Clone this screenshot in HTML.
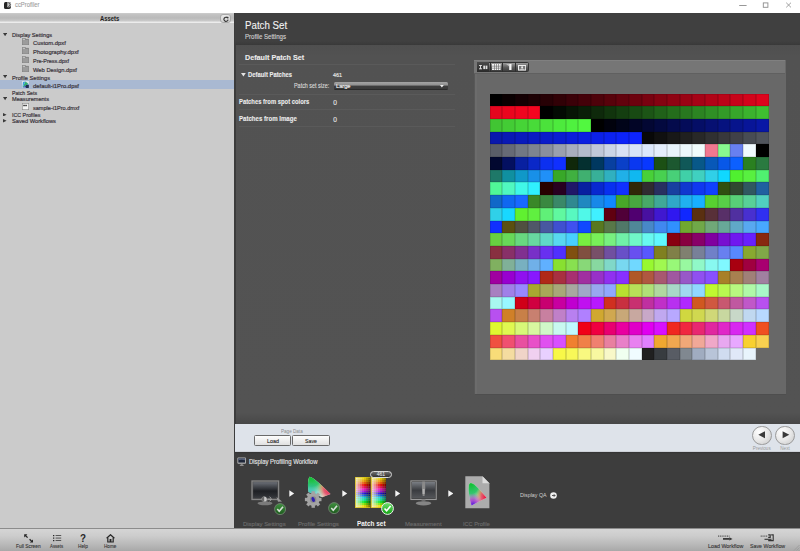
<!DOCTYPE html>
<html><head><meta charset="utf-8">
<style>
*{margin:0;padding:0;box-sizing:border-box}
html,body{width:800px;height:551px;overflow:hidden;background:#fff;font-family:"Liberation Sans",sans-serif}
.abs{position:absolute}
#title{left:0;top:0;width:800px;height:13px;background:#fff}
#left{left:0;top:13px;width:235px;height:515px;background:#cbcbcb}
#assets{left:0;top:13px;width:234px;height:10px;background:linear-gradient(#cfcfcf 0,#c4c4c4 12%,#bababa 55%,#c8c8c8 85%,#e4e4e4 100%);border-bottom:1px solid #ececec}
#sep{left:234px;top:13px;width:2px;height:515px;background:#3c3c3c}
#hdr{left:235px;top:13px;width:566px;height:31.5px;background:linear-gradient(#404040 0%,#404040 88%,#393939 100%)}
#content{left:236px;top:44.5px;width:564px;height:379px;background:linear-gradient(#4f4f4f,#525252 3%,#535353 97%,#474747)}
#panel{left:473.5px;top:60px;width:312px;height:334.5px;background:#686868;border-left:1px solid #585858;border-bottom:1px solid #4e4e4e;box-shadow:inset 2px 0 0 #6c6c6c}
#ptool{left:474px;top:60px;width:311px;height:14px;background:#767676;border-bottom:1px solid #606060}
#grid{left:490px;top:94px;width:279px;height:266px}
#pagebar{left:234.5px;top:423.5px;width:566px;height:28.5px;background:#dee3ea}
#wf{left:234.5px;top:452px;width:566px;height:76px;background:linear-gradient(#333 0,#3d3d3d 2px)}
#bottom{left:0;top:528px;width:800px;height:23px;background:linear-gradient(#d6d6d6 0%,#cccccc 35%,#b4b4b4 80%,#a8a8a8 100%)}
#grid i{position:absolute;box-shadow:inset 0 0 0 0.6px rgba(0,0,0,.2)}
.t{position:absolute;white-space:nowrap;line-height:1}
</style></head><body>
<div id="title" class="abs"></div>
<div id="left" class="abs"></div>
<div id="assets" class="abs"></div>
<div id="sep" class="abs"></div>
<div id="hdr" class="abs"></div>
<div id="content" class="abs"></div>
<div id="panel" class="abs"></div>
<div id="ptool" class="abs"></div>
<div id="grid" class="abs"><i style="left:0px;top:0px;width:12px;height:12px;background:#000000"></i>
<i style="left:12px;top:0px;width:13px;height:12px;background:#0a0001"></i>
<i style="left:25px;top:0px;width:13px;height:12px;background:#140003"></i>
<i style="left:38px;top:0px;width:12px;height:12px;background:#1d0104"></i>
<i style="left:50px;top:0px;width:13px;height:12px;background:#270105"></i>
<i style="left:63px;top:0px;width:13px;height:12px;background:#310106"></i>
<i style="left:76px;top:0px;width:12px;height:12px;background:#3b0108"></i>
<i style="left:88px;top:0px;width:13px;height:12px;background:#450109"></i>
<i style="left:101px;top:0px;width:13px;height:12px;background:#4e020a"></i>
<i style="left:114px;top:0px;width:12px;height:12px;background:#58020b"></i>
<i style="left:126px;top:0px;width:13px;height:12px;background:#62020d"></i>
<i style="left:139px;top:0px;width:13px;height:12px;background:#6d020e"></i>
<i style="left:152px;top:0px;width:12px;height:12px;background:#790210"></i>
<i style="left:164px;top:0px;width:13px;height:12px;background:#840311"></i>
<i style="left:177px;top:0px;width:13px;height:12px;background:#8f0313"></i>
<i style="left:190px;top:0px;width:12px;height:12px;background:#9a0314"></i>
<i style="left:202px;top:0px;width:13px;height:12px;background:#a60316"></i>
<i style="left:215px;top:0px;width:13px;height:12px;background:#b10417"></i>
<i style="left:228px;top:0px;width:12px;height:12px;background:#bc0418"></i>
<i style="left:240px;top:0px;width:13px;height:12px;background:#c7041a"></i>
<i style="left:253px;top:0px;width:13px;height:12px;background:#d3041b"></i>
<i style="left:266px;top:0px;width:13px;height:12px;background:#de041d"></i>
<i style="left:0px;top:12px;width:12px;height:13px;background:#e4051e"></i>
<i style="left:12px;top:12px;width:13px;height:13px;background:#ea051e"></i>
<i style="left:25px;top:12px;width:13px;height:13px;background:#ef051f"></i>
<i style="left:38px;top:12px;width:12px;height:13px;background:#f50520"></i>
<i style="left:50px;top:12px;width:13px;height:13px;background:#000000"></i>
<i style="left:63px;top:12px;width:13px;height:13px;background:#030a03"></i>
<i style="left:76px;top:12px;width:12px;height:13px;background:#071505"></i>
<i style="left:88px;top:12px;width:13px;height:13px;background:#0a1f08"></i>
<i style="left:101px;top:12px;width:13px;height:13px;background:#0e290b"></i>
<i style="left:114px;top:12px;width:12px;height:13px;background:#11340d"></i>
<i style="left:126px;top:12px;width:13px;height:13px;background:#143e10"></i>
<i style="left:139px;top:12px;width:13px;height:13px;background:#184a13"></i>
<i style="left:152px;top:12px;width:12px;height:13px;background:#1c5516"></i>
<i style="left:164px;top:12px;width:13px;height:13px;background:#206119"></i>
<i style="left:177px;top:12px;width:13px;height:13px;background:#246d1c"></i>
<i style="left:190px;top:12px;width:12px;height:13px;background:#28781f"></i>
<i style="left:202px;top:12px;width:13px;height:13px;background:#2c8422"></i>
<i style="left:215px;top:12px;width:13px;height:13px;background:#2f8f25"></i>
<i style="left:228px;top:12px;width:12px;height:13px;background:#339b28"></i>
<i style="left:240px;top:12px;width:13px;height:13px;background:#37a72b"></i>
<i style="left:253px;top:12px;width:13px;height:13px;background:#3bb22e"></i>
<i style="left:266px;top:12px;width:13px;height:13px;background:#3fbe31"></i>
<i style="left:0px;top:25px;width:12px;height:13px;background:#41c533"></i>
<i style="left:12px;top:25px;width:13px;height:13px;background:#43cc35"></i>
<i style="left:25px;top:25px;width:13px;height:13px;background:#46d437"></i>
<i style="left:38px;top:25px;width:12px;height:13px;background:#48db39"></i>
<i style="left:50px;top:25px;width:13px;height:13px;background:#4be23b"></i>
<i style="left:63px;top:25px;width:13px;height:13px;background:#4dea3d"></i>
<i style="left:76px;top:25px;width:12px;height:13px;background:#4ff13f"></i>
<i style="left:88px;top:25px;width:13px;height:13px;background:#52f840"></i>
<i style="left:101px;top:25px;width:13px;height:13px;background:#000000"></i>
<i style="left:114px;top:25px;width:12px;height:13px;background:#01020d"></i>
<i style="left:126px;top:25px;width:13px;height:13px;background:#010419"></i>
<i style="left:139px;top:25px;width:13px;height:13px;background:#020526"></i>
<i style="left:152px;top:25px;width:12px;height:13px;background:#030733"></i>
<i style="left:164px;top:25px;width:13px;height:13px;background:#03093f"></i>
<i style="left:177px;top:25px;width:13px;height:13px;background:#040b4c"></i>
<i style="left:190px;top:25px;width:12px;height:13px;background:#040c59"></i>
<i style="left:202px;top:25px;width:13px;height:13px;background:#050e66"></i>
<i style="left:215px;top:25px;width:13px;height:13px;background:#061072"></i>
<i style="left:228px;top:25px;width:12px;height:13px;background:#06127f"></i>
<i style="left:240px;top:25px;width:13px;height:13px;background:#07148c"></i>
<i style="left:253px;top:25px;width:13px;height:13px;background:#081598"></i>
<i style="left:266px;top:25px;width:13px;height:13px;background:#0817a5"></i>
<i style="left:0px;top:38px;width:12px;height:12px;background:#0918ac"></i>
<i style="left:12px;top:38px;width:13px;height:12px;background:#0919b4"></i>
<i style="left:25px;top:38px;width:13px;height:12px;background:#091abc"></i>
<i style="left:38px;top:38px;width:12px;height:12px;background:#0a1bc3"></i>
<i style="left:50px;top:38px;width:13px;height:12px;background:#0a1cca"></i>
<i style="left:63px;top:38px;width:13px;height:12px;background:#0a1dd2"></i>
<i style="left:76px;top:38px;width:12px;height:12px;background:#0b1eda"></i>
<i style="left:88px;top:38px;width:13px;height:12px;background:#0b20e1"></i>
<i style="left:101px;top:38px;width:13px;height:12px;background:#0c21e8"></i>
<i style="left:114px;top:38px;width:12px;height:12px;background:#0c22f0"></i>
<i style="left:126px;top:38px;width:13px;height:12px;background:#0c23f8"></i>
<i style="left:139px;top:38px;width:13px;height:12px;background:#0d24ff"></i>
<i style="left:152px;top:38px;width:12px;height:12px;background:#080808"></i>
<i style="left:164px;top:38px;width:13px;height:12px;background:#101010"></i>
<i style="left:177px;top:38px;width:13px;height:12px;background:#181818"></i>
<i style="left:190px;top:38px;width:12px;height:12px;background:#202020"></i>
<i style="left:202px;top:38px;width:13px;height:12px;background:#282828"></i>
<i style="left:215px;top:38px;width:13px;height:12px;background:#303032"></i>
<i style="left:228px;top:38px;width:12px;height:12px;background:#38383c"></i>
<i style="left:240px;top:38px;width:13px;height:12px;background:#404048"></i>
<i style="left:253px;top:38px;width:13px;height:12px;background:#484c54"></i>
<i style="left:266px;top:38px;width:13px;height:12px;background:#50545c"></i>
<i style="left:0px;top:50px;width:12px;height:13px;background:#5a5e68"></i>
<i style="left:12px;top:50px;width:13px;height:13px;background:#666a76"></i>
<i style="left:25px;top:50px;width:13px;height:13px;background:#727884"></i>
<i style="left:38px;top:50px;width:12px;height:13px;background:#7e8490"></i>
<i style="left:50px;top:50px;width:13px;height:13px;background:#8a909e"></i>
<i style="left:63px;top:50px;width:13px;height:13px;background:#9aa0ae"></i>
<i style="left:76px;top:50px;width:12px;height:13px;background:#a8aebe"></i>
<i style="left:88px;top:50px;width:13px;height:13px;background:#b4bccc"></i>
<i style="left:101px;top:50px;width:13px;height:13px;background:#c0c8d8"></i>
<i style="left:114px;top:50px;width:12px;height:13px;background:#ccd6e6"></i>
<i style="left:126px;top:50px;width:13px;height:13px;background:#d8e2f4"></i>
<i style="left:139px;top:50px;width:13px;height:13px;background:#d8e4f8"></i>
<i style="left:152px;top:50px;width:12px;height:13px;background:#dce8fc"></i>
<i style="left:164px;top:50px;width:13px;height:13px;background:#e4eefc"></i>
<i style="left:177px;top:50px;width:13px;height:13px;background:#e8f4fc"></i>
<i style="left:190px;top:50px;width:12px;height:13px;background:#ecf8fc"></i>
<i style="left:202px;top:50px;width:13px;height:13px;background:#f0fcfc"></i>
<i style="left:215px;top:50px;width:13px;height:13px;background:#f07890"></i>
<i style="left:228px;top:50px;width:12px;height:13px;background:#88f890"></i>
<i style="left:240px;top:50px;width:13px;height:13px;background:#6880f0"></i>
<i style="left:253px;top:50px;width:13px;height:13px;background:#f0faff"></i>
<i style="left:266px;top:50px;width:13px;height:13px;background:#000000"></i>
<i style="left:0px;top:63px;width:12px;height:13px;background:#020830"></i>
<i style="left:12px;top:63px;width:13px;height:13px;background:#041060"></i>
<i style="left:25px;top:63px;width:13px;height:13px;background:#0820a0"></i>
<i style="left:38px;top:63px;width:12px;height:13px;background:#0a28c8"></i>
<i style="left:50px;top:63px;width:13px;height:13px;background:#0c30f0"></i>
<i style="left:63px;top:63px;width:13px;height:13px;background:#1030ff"></i>
<i style="left:76px;top:63px;width:12px;height:13px;background:#10280a"></i>
<i style="left:88px;top:63px;width:13px;height:13px;background:#043030"></i>
<i style="left:101px;top:63px;width:13px;height:13px;background:#003860"></i>
<i style="left:114px;top:63px;width:12px;height:13px;background:#0840a0"></i>
<i style="left:126px;top:63px;width:13px;height:13px;background:#0a40c8"></i>
<i style="left:139px;top:63px;width:13px;height:13px;background:#0a38f0"></i>
<i style="left:152px;top:63px;width:12px;height:13px;background:#0838ff"></i>
<i style="left:164px;top:63px;width:13px;height:13px;background:#1c5014"></i>
<i style="left:177px;top:63px;width:13px;height:13px;background:#1c5830"></i>
<i style="left:190px;top:63px;width:12px;height:13px;background:#105858"></i>
<i style="left:202px;top:63px;width:13px;height:13px;background:#085888"></i>
<i style="left:215px;top:63px;width:13px;height:13px;background:#0858b8"></i>
<i style="left:228px;top:63px;width:12px;height:13px;background:#0858e8"></i>
<i style="left:240px;top:63px;width:13px;height:13px;background:#0c60ff"></i>
<i style="left:253px;top:63px;width:13px;height:13px;background:#2a8020"></i>
<i style="left:266px;top:63px;width:13px;height:13px;background:#2a7a40"></i>
<i style="left:0px;top:76px;width:12px;height:12px;background:#1e7868"></i>
<i style="left:12px;top:76px;width:13px;height:12px;background:#1090a0"></i>
<i style="left:25px;top:76px;width:13px;height:12px;background:#1098c8"></i>
<i style="left:38px;top:76px;width:12px;height:12px;background:#1890e8"></i>
<i style="left:50px;top:76px;width:13px;height:12px;background:#2090f8"></i>
<i style="left:63px;top:76px;width:13px;height:12px;background:#38a828"></i>
<i style="left:76px;top:76px;width:12px;height:12px;background:#40b040"></i>
<i style="left:88px;top:76px;width:13px;height:12px;background:#40b070"></i>
<i style="left:101px;top:76px;width:13px;height:12px;background:#38b098"></i>
<i style="left:114px;top:76px;width:12px;height:12px;background:#30b0c0"></i>
<i style="left:126px;top:76px;width:13px;height:12px;background:#20b0e8"></i>
<i style="left:139px;top:76px;width:13px;height:12px;background:#10b8f0"></i>
<i style="left:152px;top:76px;width:12px;height:12px;background:#48d038"></i>
<i style="left:164px;top:76px;width:13px;height:12px;background:#48d050"></i>
<i style="left:177px;top:76px;width:13px;height:12px;background:#48d078"></i>
<i style="left:190px;top:76px;width:12px;height:12px;background:#40d0a8"></i>
<i style="left:202px;top:76px;width:13px;height:12px;background:#40d0c0"></i>
<i style="left:215px;top:76px;width:13px;height:12px;background:#30d0e8"></i>
<i style="left:228px;top:76px;width:12px;height:12px;background:#10d8ff"></i>
<i style="left:240px;top:76px;width:13px;height:12px;background:#50f030"></i>
<i style="left:253px;top:76px;width:13px;height:12px;background:#58f040"></i>
<i style="left:266px;top:76px;width:13px;height:12px;background:#50f070"></i>
<i style="left:0px;top:88px;width:12px;height:13px;background:#50f898"></i>
<i style="left:12px;top:88px;width:13px;height:13px;background:#50f8c0"></i>
<i style="left:25px;top:88px;width:13px;height:13px;background:#40f8e8"></i>
<i style="left:38px;top:88px;width:12px;height:13px;background:#30f0ff"></i>
<i style="left:50px;top:88px;width:13px;height:13px;background:#280000"></i>
<i style="left:63px;top:88px;width:13px;height:13px;background:#280020"></i>
<i style="left:76px;top:88px;width:12px;height:13px;background:#201868"></i>
<i style="left:88px;top:88px;width:13px;height:13px;background:#0820a0"></i>
<i style="left:101px;top:88px;width:13px;height:13px;background:#0828d0"></i>
<i style="left:114px;top:88px;width:12px;height:13px;background:#0830f0"></i>
<i style="left:126px;top:88px;width:13px;height:13px;background:#1030ff"></i>
<i style="left:139px;top:88px;width:13px;height:13px;background:#302808"></i>
<i style="left:152px;top:88px;width:12px;height:13px;background:#302c30"></i>
<i style="left:164px;top:88px;width:13px;height:13px;background:#283060"></i>
<i style="left:177px;top:88px;width:13px;height:13px;background:#1840a0"></i>
<i style="left:190px;top:88px;width:12px;height:13px;background:#1038d0"></i>
<i style="left:202px;top:88px;width:13px;height:13px;background:#1038f0"></i>
<i style="left:215px;top:88px;width:13px;height:13px;background:#1040ff"></i>
<i style="left:228px;top:88px;width:12px;height:13px;background:#305010"></i>
<i style="left:240px;top:88px;width:13px;height:13px;background:#304830"></i>
<i style="left:253px;top:88px;width:13px;height:13px;background:#305860"></i>
<i style="left:266px;top:88px;width:13px;height:13px;background:#2060a0"></i>
<i style="left:0px;top:101px;width:12px;height:13px;background:#1068c8"></i>
<i style="left:12px;top:101px;width:13px;height:13px;background:#1068f0"></i>
<i style="left:25px;top:101px;width:13px;height:13px;background:#1868ff"></i>
<i style="left:38px;top:101px;width:12px;height:13px;background:#3a8828"></i>
<i style="left:50px;top:101px;width:13px;height:13px;background:#3a8840"></i>
<i style="left:63px;top:101px;width:13px;height:13px;background:#3a8868"></i>
<i style="left:76px;top:101px;width:12px;height:13px;background:#308890"></i>
<i style="left:88px;top:101px;width:13px;height:13px;background:#2088c0"></i>
<i style="left:101px;top:101px;width:13px;height:13px;background:#1888e8"></i>
<i style="left:114px;top:101px;width:12px;height:13px;background:#1088ff"></i>
<i style="left:126px;top:101px;width:13px;height:13px;background:#48a828"></i>
<i style="left:139px;top:101px;width:13px;height:13px;background:#48a840"></i>
<i style="left:152px;top:101px;width:12px;height:13px;background:#48a868"></i>
<i style="left:164px;top:101px;width:13px;height:13px;background:#40a898"></i>
<i style="left:177px;top:101px;width:13px;height:13px;background:#30a8c8"></i>
<i style="left:190px;top:101px;width:12px;height:13px;background:#20b0f0"></i>
<i style="left:202px;top:101px;width:13px;height:13px;background:#18b0ff"></i>
<i style="left:215px;top:101px;width:13px;height:13px;background:#58d030"></i>
<i style="left:228px;top:101px;width:12px;height:13px;background:#58d048"></i>
<i style="left:240px;top:101px;width:13px;height:13px;background:#58d078"></i>
<i style="left:253px;top:101px;width:13px;height:13px;background:#58d098"></i>
<i style="left:266px;top:101px;width:13px;height:13px;background:#50d0c0"></i>
<i style="left:0px;top:114px;width:12px;height:13px;background:#30d0e8"></i>
<i style="left:12px;top:114px;width:13px;height:13px;background:#18d8ff"></i>
<i style="left:25px;top:114px;width:13px;height:13px;background:#60f030"></i>
<i style="left:38px;top:114px;width:12px;height:13px;background:#60f040"></i>
<i style="left:50px;top:114px;width:13px;height:13px;background:#60f078"></i>
<i style="left:63px;top:114px;width:13px;height:13px;background:#60f8a0"></i>
<i style="left:76px;top:114px;width:12px;height:13px;background:#58f8c0"></i>
<i style="left:88px;top:114px;width:13px;height:13px;background:#50f8e8"></i>
<i style="left:101px;top:114px;width:13px;height:13px;background:#40f0ff"></i>
<i style="left:114px;top:114px;width:12px;height:13px;background:#600010"></i>
<i style="left:126px;top:114px;width:13px;height:13px;background:#500038"></i>
<i style="left:139px;top:114px;width:13px;height:13px;background:#500070"></i>
<i style="left:152px;top:114px;width:12px;height:13px;background:#4810a0"></i>
<i style="left:164px;top:114px;width:13px;height:13px;background:#4018d0"></i>
<i style="left:177px;top:114px;width:13px;height:13px;background:#3018f0"></i>
<i style="left:190px;top:114px;width:12px;height:13px;background:#1028ff"></i>
<i style="left:202px;top:114px;width:13px;height:13px;background:#5a3010"></i>
<i style="left:215px;top:114px;width:13px;height:13px;background:#583038"></i>
<i style="left:228px;top:114px;width:12px;height:13px;background:#583068"></i>
<i style="left:240px;top:114px;width:13px;height:13px;background:#5030a0"></i>
<i style="left:253px;top:114px;width:13px;height:13px;background:#4830d0"></i>
<i style="left:266px;top:114px;width:13px;height:13px;background:#3030f0"></i>
<i style="left:0px;top:127px;width:12px;height:12px;background:#1030ff"></i>
<i style="left:12px;top:127px;width:13px;height:12px;background:#5a5010"></i>
<i style="left:25px;top:127px;width:13px;height:12px;background:#505040"></i>
<i style="left:38px;top:127px;width:12px;height:12px;background:#505868"></i>
<i style="left:50px;top:127px;width:13px;height:12px;background:#4858a0"></i>
<i style="left:63px;top:127px;width:13px;height:12px;background:#4050d0"></i>
<i style="left:76px;top:127px;width:12px;height:12px;background:#4050f0"></i>
<i style="left:88px;top:127px;width:13px;height:12px;background:#1048ff"></i>
<i style="left:101px;top:127px;width:13px;height:12px;background:#587820"></i>
<i style="left:114px;top:127px;width:12px;height:12px;background:#587848"></i>
<i style="left:126px;top:127px;width:13px;height:12px;background:#507868"></i>
<i style="left:139px;top:127px;width:13px;height:12px;background:#508898"></i>
<i style="left:152px;top:127px;width:12px;height:12px;background:#4888c8"></i>
<i style="left:164px;top:127px;width:13px;height:12px;background:#4088f0"></i>
<i style="left:177px;top:127px;width:13px;height:12px;background:#3090ff"></i>
<i style="left:190px;top:127px;width:12px;height:12px;background:#70a830"></i>
<i style="left:202px;top:127px;width:13px;height:12px;background:#70a848"></i>
<i style="left:215px;top:127px;width:13px;height:12px;background:#70a878"></i>
<i style="left:228px;top:127px;width:12px;height:12px;background:#68a898"></i>
<i style="left:240px;top:127px;width:13px;height:12px;background:#60a8c8"></i>
<i style="left:253px;top:127px;width:13px;height:12px;background:#58a8f0"></i>
<i style="left:266px;top:127px;width:13px;height:12px;background:#48a8ff"></i>
<i style="left:0px;top:139px;width:12px;height:13px;background:#68d040"></i>
<i style="left:12px;top:139px;width:13px;height:13px;background:#68d858"></i>
<i style="left:25px;top:139px;width:13px;height:13px;background:#68d880"></i>
<i style="left:38px;top:139px;width:12px;height:13px;background:#68d8a0"></i>
<i style="left:50px;top:139px;width:13px;height:13px;background:#60d8c8"></i>
<i style="left:63px;top:139px;width:13px;height:13px;background:#58d8f0"></i>
<i style="left:76px;top:139px;width:12px;height:13px;background:#48d0ff"></i>
<i style="left:88px;top:139px;width:13px;height:13px;background:#78f040"></i>
<i style="left:101px;top:139px;width:13px;height:13px;background:#78f058"></i>
<i style="left:114px;top:139px;width:12px;height:13px;background:#78f080"></i>
<i style="left:126px;top:139px;width:13px;height:13px;background:#70f0a8"></i>
<i style="left:139px;top:139px;width:13px;height:13px;background:#70f8c8"></i>
<i style="left:152px;top:139px;width:12px;height:13px;background:#68f8f0"></i>
<i style="left:164px;top:139px;width:13px;height:13px;background:#60f8ff"></i>
<i style="left:177px;top:139px;width:13px;height:13px;background:#880010"></i>
<i style="left:190px;top:139px;width:12px;height:13px;background:#880040"></i>
<i style="left:202px;top:139px;width:13px;height:13px;background:#880068"></i>
<i style="left:215px;top:139px;width:13px;height:13px;background:#8000a0"></i>
<i style="left:228px;top:139px;width:12px;height:13px;background:#7810d0"></i>
<i style="left:240px;top:139px;width:13px;height:13px;background:#7018f0"></i>
<i style="left:253px;top:139px;width:13px;height:13px;background:#6820ff"></i>
<i style="left:266px;top:139px;width:13px;height:13px;background:#882810"></i>
<i style="left:0px;top:152px;width:12px;height:13px;background:#883040"></i>
<i style="left:12px;top:152px;width:13px;height:13px;background:#883068"></i>
<i style="left:25px;top:152px;width:13px;height:13px;background:#803090"></i>
<i style="left:38px;top:152px;width:12px;height:13px;background:#7830c8"></i>
<i style="left:50px;top:152px;width:13px;height:13px;background:#6830f0"></i>
<i style="left:63px;top:152px;width:13px;height:13px;background:#5030ff"></i>
<i style="left:76px;top:152px;width:12px;height:13px;background:#805010"></i>
<i style="left:88px;top:152px;width:13px;height:13px;background:#805040"></i>
<i style="left:101px;top:152px;width:13px;height:13px;background:#785068"></i>
<i style="left:114px;top:152px;width:12px;height:13px;background:#7050a0"></i>
<i style="left:126px;top:152px;width:13px;height:13px;background:#6850c8"></i>
<i style="left:139px;top:152px;width:13px;height:13px;background:#6850f0"></i>
<i style="left:152px;top:152px;width:12px;height:13px;background:#5858ff"></i>
<i style="left:164px;top:152px;width:13px;height:13px;background:#808020"></i>
<i style="left:177px;top:152px;width:13px;height:13px;background:#808048"></i>
<i style="left:190px;top:152px;width:12px;height:13px;background:#808070"></i>
<i style="left:202px;top:152px;width:13px;height:13px;background:#788098"></i>
<i style="left:215px;top:152px;width:13px;height:13px;background:#7080c8"></i>
<i style="left:228px;top:152px;width:12px;height:13px;background:#6880f0"></i>
<i style="left:240px;top:152px;width:13px;height:13px;background:#5888ff"></i>
<i style="left:253px;top:152px;width:13px;height:13px;background:#88a830"></i>
<i style="left:266px;top:152px;width:13px;height:13px;background:#80a848"></i>
<i style="left:0px;top:165px;width:12px;height:12px;background:#80b060"></i>
<i style="left:12px;top:165px;width:13px;height:12px;background:#80b098"></i>
<i style="left:25px;top:165px;width:13px;height:12px;background:#78b0c0"></i>
<i style="left:38px;top:165px;width:12px;height:12px;background:#70b0e8"></i>
<i style="left:50px;top:165px;width:13px;height:12px;background:#60b0ff"></i>
<i style="left:63px;top:165px;width:13px;height:12px;background:#88e030"></i>
<i style="left:76px;top:165px;width:12px;height:12px;background:#88e050"></i>
<i style="left:88px;top:165px;width:13px;height:12px;background:#88d878"></i>
<i style="left:101px;top:165px;width:13px;height:12px;background:#88d8a0"></i>
<i style="left:114px;top:165px;width:12px;height:12px;background:#80d8c8"></i>
<i style="left:126px;top:165px;width:13px;height:12px;background:#78d8f0"></i>
<i style="left:139px;top:165px;width:13px;height:12px;background:#70d8ff"></i>
<i style="left:152px;top:165px;width:12px;height:12px;background:#98f830"></i>
<i style="left:164px;top:165px;width:13px;height:12px;background:#a0f850"></i>
<i style="left:177px;top:165px;width:13px;height:12px;background:#98f878"></i>
<i style="left:190px;top:165px;width:12px;height:12px;background:#98f8a0"></i>
<i style="left:202px;top:165px;width:13px;height:12px;background:#90f8c8"></i>
<i style="left:215px;top:165px;width:13px;height:12px;background:#88f8f0"></i>
<i style="left:228px;top:165px;width:12px;height:12px;background:#80f8ff"></i>
<i style="left:240px;top:165px;width:13px;height:12px;background:#a80010"></i>
<i style="left:253px;top:165px;width:13px;height:12px;background:#a00040"></i>
<i style="left:266px;top:165px;width:13px;height:12px;background:#a80070"></i>
<i style="left:0px;top:177px;width:12px;height:13px;background:#a000a0"></i>
<i style="left:12px;top:177px;width:13px;height:13px;background:#9800d0"></i>
<i style="left:25px;top:177px;width:13px;height:13px;background:#9010f0"></i>
<i style="left:38px;top:177px;width:12px;height:13px;background:#8818ff"></i>
<i style="left:50px;top:177px;width:13px;height:13px;background:#b02818"></i>
<i style="left:63px;top:177px;width:13px;height:13px;background:#a83040"></i>
<i style="left:76px;top:177px;width:12px;height:13px;background:#a83070"></i>
<i style="left:88px;top:177px;width:13px;height:13px;background:#a030a0"></i>
<i style="left:101px;top:177px;width:13px;height:13px;background:#9830c8"></i>
<i style="left:114px;top:177px;width:12px;height:13px;background:#9030f0"></i>
<i style="left:126px;top:177px;width:13px;height:13px;background:#8830ff"></i>
<i style="left:139px;top:177px;width:13px;height:13px;background:#b05828"></i>
<i style="left:152px;top:177px;width:12px;height:13px;background:#b05840"></i>
<i style="left:164px;top:177px;width:13px;height:13px;background:#a85870"></i>
<i style="left:177px;top:177px;width:13px;height:13px;background:#a058a0"></i>
<i style="left:190px;top:177px;width:12px;height:13px;background:#9858c8"></i>
<i style="left:202px;top:177px;width:13px;height:13px;background:#9050f0"></i>
<i style="left:215px;top:177px;width:13px;height:13px;background:#8850ff"></i>
<i style="left:228px;top:177px;width:12px;height:13px;background:#a88028"></i>
<i style="left:240px;top:177px;width:13px;height:13px;background:#a88050"></i>
<i style="left:253px;top:177px;width:13px;height:13px;background:#a08078"></i>
<i style="left:266px;top:177px;width:13px;height:13px;background:#a080a0"></i>
<i style="left:0px;top:190px;width:12px;height:13px;background:#a880c0"></i>
<i style="left:12px;top:190px;width:13px;height:13px;background:#a080e8"></i>
<i style="left:25px;top:190px;width:13px;height:13px;background:#9888ff"></i>
<i style="left:38px;top:190px;width:12px;height:13px;background:#a8a830"></i>
<i style="left:50px;top:190px;width:13px;height:13px;background:#a8a858"></i>
<i style="left:63px;top:190px;width:13px;height:13px;background:#a8a878"></i>
<i style="left:76px;top:190px;width:12px;height:13px;background:#a8a8a0"></i>
<i style="left:88px;top:190px;width:13px;height:13px;background:#a0a8c8"></i>
<i style="left:101px;top:190px;width:13px;height:13px;background:#98a8f0"></i>
<i style="left:114px;top:190px;width:12px;height:13px;background:#90a8ff"></i>
<i style="left:126px;top:190px;width:13px;height:13px;background:#b8e030"></i>
<i style="left:139px;top:190px;width:13px;height:13px;background:#b8e058"></i>
<i style="left:152px;top:190px;width:12px;height:13px;background:#b0e078"></i>
<i style="left:164px;top:190px;width:13px;height:13px;background:#b0d8a0"></i>
<i style="left:177px;top:190px;width:13px;height:13px;background:#a8d8c8"></i>
<i style="left:190px;top:190px;width:12px;height:13px;background:#a0d8f0"></i>
<i style="left:202px;top:190px;width:13px;height:13px;background:#90d8ff"></i>
<i style="left:215px;top:190px;width:13px;height:13px;background:#c0f830"></i>
<i style="left:228px;top:190px;width:12px;height:13px;background:#b8f850"></i>
<i style="left:240px;top:190px;width:13px;height:13px;background:#b8f880"></i>
<i style="left:253px;top:190px;width:13px;height:13px;background:#b0f8a8"></i>
<i style="left:266px;top:190px;width:13px;height:13px;background:#a8f8c8"></i>
<i style="left:0px;top:203px;width:12px;height:12px;background:#a8f8f0"></i>
<i style="left:12px;top:203px;width:13px;height:12px;background:#98f8ff"></i>
<i style="left:25px;top:203px;width:13px;height:12px;background:#d00018"></i>
<i style="left:38px;top:203px;width:12px;height:12px;background:#d00040"></i>
<i style="left:50px;top:203px;width:13px;height:12px;background:#c80070"></i>
<i style="left:63px;top:203px;width:13px;height:12px;background:#c800a0"></i>
<i style="left:76px;top:203px;width:12px;height:12px;background:#c000d0"></i>
<i style="left:88px;top:203px;width:13px;height:12px;background:#c010f0"></i>
<i style="left:101px;top:203px;width:13px;height:12px;background:#b818ff"></i>
<i style="left:114px;top:203px;width:12px;height:12px;background:#d03020"></i>
<i style="left:126px;top:203px;width:13px;height:12px;background:#c83040"></i>
<i style="left:139px;top:203px;width:13px;height:12px;background:#c83070"></i>
<i style="left:152px;top:203px;width:12px;height:12px;background:#c030a0"></i>
<i style="left:164px;top:203px;width:13px;height:12px;background:#c030c8"></i>
<i style="left:177px;top:203px;width:13px;height:12px;background:#b830f0"></i>
<i style="left:190px;top:203px;width:12px;height:12px;background:#b028ff"></i>
<i style="left:202px;top:203px;width:13px;height:12px;background:#d05820"></i>
<i style="left:215px;top:203px;width:13px;height:12px;background:#d05840"></i>
<i style="left:228px;top:203px;width:12px;height:12px;background:#c85870"></i>
<i style="left:240px;top:203px;width:13px;height:12px;background:#c058a0"></i>
<i style="left:253px;top:203px;width:13px;height:12px;background:#c058c8"></i>
<i style="left:266px;top:203px;width:13px;height:12px;background:#b850f0"></i>
<i style="left:0px;top:215px;width:12px;height:13px;background:#b850f0"></i>
<i style="left:12px;top:215px;width:13px;height:13px;background:#d08028"></i>
<i style="left:25px;top:215px;width:13px;height:13px;background:#c88048"></i>
<i style="left:38px;top:215px;width:12px;height:13px;background:#c88070"></i>
<i style="left:50px;top:215px;width:13px;height:13px;background:#c880a0"></i>
<i style="left:63px;top:215px;width:13px;height:13px;background:#c080c8"></i>
<i style="left:76px;top:215px;width:12px;height:13px;background:#b880f0"></i>
<i style="left:88px;top:215px;width:13px;height:13px;background:#b080ff"></i>
<i style="left:101px;top:215px;width:13px;height:13px;background:#d0a830"></i>
<i style="left:114px;top:215px;width:12px;height:13px;background:#d0a850"></i>
<i style="left:126px;top:215px;width:13px;height:13px;background:#c8a878"></i>
<i style="left:139px;top:215px;width:13px;height:13px;background:#c8a8a0"></i>
<i style="left:152px;top:215px;width:12px;height:13px;background:#c8a8c8"></i>
<i style="left:164px;top:215px;width:13px;height:13px;background:#c0a8f0"></i>
<i style="left:177px;top:215px;width:13px;height:13px;background:#b8a8ff"></i>
<i style="left:190px;top:215px;width:12px;height:13px;background:#d0d840"></i>
<i style="left:202px;top:215px;width:13px;height:13px;background:#d0d850"></i>
<i style="left:215px;top:215px;width:13px;height:13px;background:#d0d878"></i>
<i style="left:228px;top:215px;width:12px;height:13px;background:#c8d8a0"></i>
<i style="left:240px;top:215px;width:13px;height:13px;background:#c8d8c8"></i>
<i style="left:253px;top:215px;width:13px;height:13px;background:#c0d8f0"></i>
<i style="left:266px;top:215px;width:13px;height:13px;background:#b8d8ff"></i>
<i style="left:0px;top:228px;width:12px;height:13px;background:#e0f830"></i>
<i style="left:12px;top:228px;width:13px;height:13px;background:#e0f850"></i>
<i style="left:25px;top:228px;width:13px;height:13px;background:#d8f878"></i>
<i style="left:38px;top:228px;width:12px;height:13px;background:#d8f8a0"></i>
<i style="left:50px;top:228px;width:13px;height:13px;background:#d0f8c8"></i>
<i style="left:63px;top:228px;width:13px;height:13px;background:#c8f8f0"></i>
<i style="left:76px;top:228px;width:12px;height:13px;background:#c0f8ff"></i>
<i style="left:88px;top:228px;width:13px;height:13px;background:#f00018"></i>
<i style="left:101px;top:228px;width:13px;height:13px;background:#f00040"></i>
<i style="left:114px;top:228px;width:12px;height:13px;background:#e80070"></i>
<i style="left:126px;top:228px;width:13px;height:13px;background:#e800a0"></i>
<i style="left:139px;top:228px;width:13px;height:13px;background:#e000c8"></i>
<i style="left:152px;top:228px;width:12px;height:13px;background:#e000f0"></i>
<i style="left:164px;top:228px;width:13px;height:13px;background:#d810ff"></i>
<i style="left:177px;top:228px;width:13px;height:13px;background:#f02820"></i>
<i style="left:190px;top:228px;width:12px;height:13px;background:#f02840"></i>
<i style="left:202px;top:228px;width:13px;height:13px;background:#e82870"></i>
<i style="left:215px;top:228px;width:13px;height:13px;background:#e028a0"></i>
<i style="left:228px;top:228px;width:12px;height:13px;background:#e028c8"></i>
<i style="left:240px;top:228px;width:13px;height:13px;background:#d828f0"></i>
<i style="left:253px;top:228px;width:13px;height:13px;background:#d030ff"></i>
<i style="left:266px;top:228px;width:13px;height:13px;background:#f05020"></i>
<i style="left:0px;top:241px;width:12px;height:13px;background:#f05040"></i>
<i style="left:12px;top:241px;width:13px;height:13px;background:#f05070"></i>
<i style="left:25px;top:241px;width:13px;height:13px;background:#e850a0"></i>
<i style="left:38px;top:241px;width:12px;height:13px;background:#e850c8"></i>
<i style="left:50px;top:241px;width:13px;height:13px;background:#e050f0"></i>
<i style="left:63px;top:241px;width:13px;height:13px;background:#d850ff"></i>
<i style="left:76px;top:241px;width:12px;height:13px;background:#f08030"></i>
<i style="left:88px;top:241px;width:13px;height:13px;background:#f08048"></i>
<i style="left:101px;top:241px;width:13px;height:13px;background:#f08070"></i>
<i style="left:114px;top:241px;width:12px;height:13px;background:#e880a0"></i>
<i style="left:126px;top:241px;width:13px;height:13px;background:#e880c8"></i>
<i style="left:139px;top:241px;width:13px;height:13px;background:#e880f0"></i>
<i style="left:152px;top:241px;width:12px;height:13px;background:#e080ff"></i>
<i style="left:164px;top:241px;width:13px;height:13px;background:#f0a830"></i>
<i style="left:177px;top:241px;width:13px;height:13px;background:#f0a850"></i>
<i style="left:190px;top:241px;width:12px;height:13px;background:#f0a878"></i>
<i style="left:202px;top:241px;width:13px;height:13px;background:#f0a898"></i>
<i style="left:215px;top:241px;width:13px;height:13px;background:#f0a8c8"></i>
<i style="left:228px;top:241px;width:12px;height:13px;background:#e8a8f0"></i>
<i style="left:240px;top:241px;width:13px;height:13px;background:#e8a8ff"></i>
<i style="left:253px;top:241px;width:13px;height:13px;background:#f8d030"></i>
<i style="left:266px;top:241px;width:13px;height:13px;background:#f8d050"></i>
<i style="left:0px;top:254px;width:12px;height:12px;background:#f8dc78"></i>
<i style="left:12px;top:254px;width:13px;height:12px;background:#f4dca0"></i>
<i style="left:25px;top:254px;width:13px;height:12px;background:#f0d4c8"></i>
<i style="left:38px;top:254px;width:12px;height:12px;background:#f0d0f0"></i>
<i style="left:50px;top:254px;width:13px;height:12px;background:#e8d0ff"></i>
<i style="left:63px;top:254px;width:13px;height:12px;background:#f8f848"></i>
<i style="left:76px;top:254px;width:12px;height:12px;background:#f8f858"></i>
<i style="left:88px;top:254px;width:13px;height:12px;background:#f8f880"></i>
<i style="left:101px;top:254px;width:13px;height:12px;background:#f8f8a0"></i>
<i style="left:114px;top:254px;width:12px;height:12px;background:#f8f8c8"></i>
<i style="left:126px;top:254px;width:13px;height:12px;background:#f0fff0"></i>
<i style="left:139px;top:254px;width:13px;height:12px;background:#f0fcff"></i>
<i style="left:152px;top:254px;width:12px;height:12px;background:#202020"></i>
<i style="left:164px;top:254px;width:13px;height:12px;background:#383c40"></i>
<i style="left:177px;top:254px;width:13px;height:12px;background:#585c64"></i>
<i style="left:190px;top:254px;width:12px;height:12px;background:#808890"></i>
<i style="left:202px;top:254px;width:13px;height:12px;background:#a0acc0"></i>
<i style="left:215px;top:254px;width:13px;height:12px;background:#b8c4d8"></i>
<i style="left:228px;top:254px;width:12px;height:12px;background:#d0dcf0"></i>
<i style="left:240px;top:254px;width:13px;height:12px;background:#e0e8f8"></i>
<i style="left:253px;top:254px;width:13px;height:12px;background:#e8f4fc"></i></div>
<div id="pagebar" class="abs"></div>
<div id="wf" class="abs"></div>
<div id="bottom" class="abs"></div>
<div class="abs" style="left:4.2px;top:1.5px;width:7.3px;height:7.3px;background:#262626;border-radius:1.5px 2px 2px 1.5px"></div>
<svg class="abs" style="left:6.60px;top:2.40px" width="5" height="5.4" viewBox="0 0 5 5.4"><path d="M0.6 0.4H1.6A2.3 2.3 0 0 1 1.6 5H0.6Z" fill="none" stroke="#ddd" stroke-width="0.7"/><path d="M1.2 1.1C3 1.3 3.3 4 1.2 4.3Z" fill="#e8e8e8"/></svg>
<div class="t" style="left:14.80px;top:1.82px;font-size:6.80px;color:#9c9c9c;transform:scaleX(0.861);transform-origin:0 0;-webkit-text-stroke:0.1px #9c9c9c;">ccProfiler</div>
<svg class="abs" style="left:736.00px;top:0.00px" width="60" height="12" viewBox="0 0 60 12"><path d="M3.2 5.5H10.6" stroke="#8c8c8c" stroke-width="0.9"/><rect x="27.3" y="2.9" width="4.6" height="4.4" fill="none" stroke="#8c8c8c" stroke-width="0.9"/><path d="M50.2 2.7L55 7.4M55 2.7L50.2 7.4" stroke="#8c8c8c" stroke-width="0.8"/></svg>
<div class="t" style="left:100.35px;top:16.19px;font-size:6.60px;color:#1e1e1e;font-weight:bold;transform:scaleX(0.892);transform-origin:0 0;">Assets</div>
<div class="abs" style="left:220px;top:14px;width:10.5px;height:8.5px;border:0.6px solid #a8a8a8;border-radius:3px;background:linear-gradient(#e8e8e8,#d0d0d0)"></div>
<svg class="abs" style="left:222.50px;top:15.50px" width="6" height="6" viewBox="0 0 6 6"><path d="M4.6 1.9A2.1 2.1 0 1 0 5.1 3.6" fill="none" stroke="#333" stroke-width="1.1"/><path d="M3.3 0.6L5.6 0.9L5 3.1Z" fill="#333"/></svg>
<svg class="abs" style="left:3.20px;top:32.50px" width="4.2" height="3.4" viewBox="0 0 4.2 3.4"><path d="M0 0L4.2 0L2.1 3.2Z" fill="#3a3a3a"/></svg>
<div class="t" style="left:12.00px;top:31.82px;font-size:6.10px;color:#38323a;transform:scaleX(0.917);transform-origin:0 0;-webkit-text-stroke:0.2px #38323a;">Display Settings</div>
<svg class="abs" style="left:22.20px;top:38.30px" width="7" height="7.2" viewBox="0 0 7 7.2"><path d="M0.3 0.3H3.2L3.8 1.3H6.7V7H0.3Z" fill="#8c8c8c" stroke="#6e6e6e" stroke-width="0.5"/><rect x="0.8" y="2" width="5.4" height="4.6" fill="#9c9c9c"/><rect x="0.8" y="0.8" width="2.2" height="0.9" fill="#d8d8d8"/></svg>
<div class="t" style="left:32.70px;top:40.11px;font-size:6.10px;color:#38323a;transform:scaleX(0.958);transform-origin:0 0;-webkit-text-stroke:0.2px #38323a;">Custom.dpxf</div>
<svg class="abs" style="left:22.20px;top:47.20px" width="7" height="7.2" viewBox="0 0 7 7.2"><path d="M0.3 0.3H3.2L3.8 1.3H6.7V7H0.3Z" fill="#8c8c8c" stroke="#6e6e6e" stroke-width="0.5"/><rect x="0.8" y="2" width="5.4" height="4.6" fill="#9c9c9c"/><rect x="0.8" y="0.8" width="2.2" height="0.9" fill="#d8d8d8"/></svg>
<div class="t" style="left:32.70px;top:49.01px;font-size:6.10px;color:#38323a;transform:scaleX(0.966);transform-origin:0 0;-webkit-text-stroke:0.2px #38323a;">Photography.dpxf</div>
<svg class="abs" style="left:22.20px;top:56.10px" width="7" height="7.2" viewBox="0 0 7 7.2"><path d="M0.3 0.3H3.2L3.8 1.3H6.7V7H0.3Z" fill="#8c8c8c" stroke="#6e6e6e" stroke-width="0.5"/><rect x="0.8" y="2" width="5.4" height="4.6" fill="#9c9c9c"/><rect x="0.8" y="0.8" width="2.2" height="0.9" fill="#d8d8d8"/></svg>
<div class="t" style="left:32.70px;top:57.91px;font-size:6.10px;color:#38323a;transform:scaleX(0.892);transform-origin:0 0;-webkit-text-stroke:0.2px #38323a;">Pre-Press.dpxf</div>
<svg class="abs" style="left:22.20px;top:64.90px" width="7" height="7.2" viewBox="0 0 7 7.2"><path d="M0.3 0.3H3.2L3.8 1.3H6.7V7H0.3Z" fill="#8c8c8c" stroke="#6e6e6e" stroke-width="0.5"/><rect x="0.8" y="2" width="5.4" height="4.6" fill="#9c9c9c"/><rect x="0.8" y="0.8" width="2.2" height="0.9" fill="#d8d8d8"/></svg>
<div class="t" style="left:32.70px;top:66.72px;font-size:6.10px;color:#38323a;transform:scaleX(0.949);transform-origin:0 0;-webkit-text-stroke:0.2px #38323a;">Web Design.dpxf</div>
<div class="abs" style="left:0;top:80px;width:234px;height:9px;background:#a9b9d2"></div>
<svg class="abs" style="left:3.20px;top:75.30px" width="4.2" height="3.4" viewBox="0 0 4.2 3.4"><path d="M0 0L4.2 0L2.1 3.2Z" fill="#3a3a3a"/></svg>
<div class="t" style="left:12.00px;top:74.52px;font-size:6.10px;color:#38323a;transform:scaleX(0.926);transform-origin:0 0;-webkit-text-stroke:0.2px #38323a;">Profile Settings</div>
<svg class="abs" style="left:22.20px;top:81.20px" width="7" height="7" viewBox="0 0 7 7"><rect x="0" y="0" width="7" height="7" fill="#d8e0e8"/><path d="M0.5 6.5L3.5 0.5L6.5 3Z" fill="#30b070"/><path d="M0.5 6.5L6.5 3L6.5 6.5Z" fill="#3050c0"/><path d="M0.5 6.5L3.5 0.5L1 1Z" fill="#40a0e0"/><rect x="3.8" y="4" width="3" height="3" fill="#203050"/></svg>
<div class="t" style="left:32.70px;top:82.52px;font-size:6.10px;color:#38323a;transform:scaleX(0.962);transform-origin:0 0;-webkit-text-stroke:0.2px #38323a;">default-i1Pro.dpsf</div>
<div class="t" style="left:12.00px;top:89.92px;font-size:6.10px;color:#38323a;transform:scaleX(0.847);transform-origin:0 0;-webkit-text-stroke:0.2px #38323a;">Patch Sets</div>
<svg class="abs" style="left:3.20px;top:97.20px" width="4.2" height="3.4" viewBox="0 0 4.2 3.4"><path d="M0 0L4.2 0L2.1 3.2Z" fill="#3a3a3a"/></svg>
<div class="t" style="left:12.00px;top:96.31px;font-size:6.10px;color:#38323a;transform:scaleX(0.917);transform-origin:0 0;-webkit-text-stroke:0.2px #38323a;">Measurements</div>
<svg class="abs" style="left:22.20px;top:102.80px" width="7" height="7" viewBox="0 0 7 7"><rect x="0.3" y="0.3" width="6.4" height="6.4" fill="#f4f4f4" stroke="#8a8a8a" stroke-width="0.6"/><rect x="1.3" y="1.8" width="1.5" height="1.4" fill="#222"/><rect x="3.3" y="1.8" width="1.5" height="1.4" fill="#222"/></svg>
<div class="t" style="left:32.70px;top:104.52px;font-size:6.10px;color:#38323a;transform:scaleX(0.911);transform-origin:0 0;-webkit-text-stroke:0.2px #38323a;">sample-i1Pro.dmxf</div>
<svg class="abs" style="left:3.10px;top:112.80px" width="3.8" height="3.6" viewBox="0 0 3.8 3.6"><path d="M0 0L3.6 1.75L0 3.5Z" fill="#3a3a3a"/></svg>
<div class="t" style="left:12.00px;top:112.42px;font-size:6.10px;color:#38323a;transform:scaleX(0.870);transform-origin:0 0;-webkit-text-stroke:0.2px #38323a;">ICC Profiles</div>
<svg class="abs" style="left:3.10px;top:119.10px" width="3.8" height="3.6" viewBox="0 0 3.8 3.6"><path d="M0 0L3.6 1.75L0 3.5Z" fill="#3a3a3a"/></svg>
<div class="t" style="left:12.00px;top:118.22px;font-size:6.10px;color:#38323a;transform:scaleX(0.936);transform-origin:0 0;-webkit-text-stroke:0.2px #38323a;">Saved Workflows</div>
<div class="t" style="left:244.70px;top:21.36px;font-size:10.40px;color:#f4f4f4;transform:scaleX(0.936);transform-origin:0 0;-webkit-text-stroke:0.1px #f4f4f4;">Patch Set</div>
<div class="t" style="left:244.70px;top:34.15px;font-size:6.30px;color:#d2d2d2;transform:scaleX(0.968);transform-origin:0 0;-webkit-text-stroke:0.12px #d2d2d2;">Profile Settings</div>
<div class="t" style="left:245.00px;top:54.02px;font-size:7.50px;color:#ececec;font-weight:bold;transform:scaleX(0.960);transform-origin:0 0;-webkit-text-stroke:0.1px #ececec;">Default Patch Set</div>
<div class="abs" style="left:239px;top:64.0px;width:216px;height:1px;background:#5a5a5a"></div>
<div class="abs" style="left:239px;top:93.8px;width:216px;height:1px;background:#5a5a5a"></div>
<div class="abs" style="left:239px;top:109.3px;width:216px;height:1px;background:#5a5a5a"></div>
<div class="abs" style="left:239px;top:126.3px;width:216px;height:1px;background:#5a5a5a"></div>
<svg class="abs" style="left:241.00px;top:73.40px" width="4.8" height="3.6" viewBox="0 0 4.8 3.6"><path d="M0 0L4.8 0L2.4 3.4Z" fill="#e4e4e4"/></svg>
<div class="t" style="left:247.70px;top:71.67px;font-size:6.50px;color:#ececec;font-weight:bold;transform:scaleX(0.902);transform-origin:0 0;-webkit-text-stroke:0.1px #ececec;">Default Patches</div>
<div class="t" style="left:332.70px;top:72.03px;font-size:6.20px;color:#e0e0e0;transform:scaleX(0.870);transform-origin:0 0;-webkit-text-stroke:0.15px #f0f0f0;">461</div>
<div class="t" style="left:293.70px;top:82.76px;font-size:6.40px;color:#dcdcdc;transform:scaleX(0.848);transform-origin:0 0;-webkit-text-stroke:0.12px #dcdcdc;">Patch set size:</div>
<div class="abs" style="left:333.7px;top:81.6px;width:114.5px;height:8px;background:linear-gradient(#a4a4a4 0%,#8e8e8e 48%,#3e3e3e 53%,#3a3a3a 100%);border-radius:1.5px;border-bottom:0.5px solid #2a2a2a"></div>
<div class="t" style="left:335.60px;top:83.00px;font-size:6.00px;color:#f0f0f0;transform:scaleX(0.945);transform-origin:0 0;-webkit-text-stroke:0.15px #f0f0f0;">Large</div>
<svg class="abs" style="left:440.30px;top:85.00px" width="3.8" height="2.6" viewBox="0 0 3.8 2.6"><path d="M0 0L3.8 0L1.9 2.5Z" fill="#eee"/></svg>
<div class="t" style="left:239.40px;top:99.27px;font-size:6.50px;color:#ececec;font-weight:bold;transform:scaleX(0.901);transform-origin:0 0;-webkit-text-stroke:0.1px #ececec;">Patches from spot colors</div>
<div class="t" style="left:333.30px;top:99.59px;font-size:6.60px;color:#dcdcdc;-webkit-text-stroke:0.15px #f0f0f0;">0</div>
<div class="t" style="left:239.40px;top:116.47px;font-size:6.50px;color:#ececec;font-weight:bold;transform:scaleX(0.936);transform-origin:0 0;-webkit-text-stroke:0.1px #ececec;">Patches from Image</div>
<div class="t" style="left:333.30px;top:116.69px;font-size:6.60px;color:#dcdcdc;-webkit-text-stroke:0.15px #f0f0f0;">0</div>
<div class="abs" style="left:474.3px;top:60.3px;width:311px;height:1px;background:#808080"></div>
<div class="abs" style="left:476.6px;top:62.1px;width:52px;height:9.8px;background:linear-gradient(#9a9a9a,#5a5a5a 55%,#3e3e3e);border:0.6px solid #333;border-radius:1.5px"></div>
<div class="abs" style="left:476.9px;top:62.4px;width:12.6px;height:9.2px;background:linear-gradient(#4a4a4a,#2a2a2a)"></div>
<div class="abs" style="left:489.5px;top:62.3px;width:0.7px;height:9.4px;background:#2e2e2e"></div>
<div class="abs" style="left:502.0px;top:62.3px;width:0.7px;height:9.4px;background:#2e2e2e"></div>
<div class="abs" style="left:515.0px;top:62.3px;width:0.7px;height:9.4px;background:#2e2e2e"></div>
<svg class="abs" style="left:478.80px;top:65.20px" width="9" height="4.5" viewBox="0 0 9 4.5"><path d="M0 0.4H3M0 3.8H3M1.5 0.4V3.8" stroke="#eee" stroke-width="0.9"/><rect x="4.3" y="0.6" width="1.8" height="3.5" fill="#ddd"/><rect x="6.6" y="0.6" width="1.8" height="3.5" fill="#ddd"/></svg>
<svg class="abs" style="left:492.00px;top:63.80px" width="9" height="6.5" viewBox="0 0 9 6.5"><rect x="0" y="0" width="8.6" height="6.2" fill="#f4f4f4"/><rect x="2.00" y="0" width="0.6" height="6.2" fill="#666"/><rect x="4.20" y="0" width="0.6" height="6.2" fill="#666"/><rect x="6.40" y="0" width="0.6" height="6.2" fill="#666"/><rect x="0" y="1.80" width="8.6" height="0.6" fill="#666"/><rect x="0" y="3.80" width="8.6" height="0.6" fill="#666"/></svg>
<svg class="abs" style="left:505.50px;top:63.60px" width="7" height="6.6" viewBox="0 0 7 6.6"><rect x="3.2" y="0" width="2.3" height="6.5" fill="#f4f4f4"/><path d="M0 0H3V2.2Z" fill="#bbb"/></svg>
<svg class="abs" style="left:517.70px;top:64.50px" width="8.5" height="6" viewBox="0 0 8.5 6"><rect x="0" y="0" width="8.2" height="5.6" fill="#eee"/><rect x="1" y="1" width="6.2" height="3.6" fill="#777"/><circle cx="4.1" cy="2.2" r="1" fill="#eee"/><path d="M2 4.6Q4.1 2.6 6.2 4.6Z" fill="#eee"/></svg>
<div class="abs" style="left:234.5px;top:451px;width:566px;height:1px;background:#cdd1d8"></div>
<div class="t" style="left:280.95px;top:428.65px;font-size:5.00px;color:#8c8c8c;transform:scaleX(0.918);transform-origin:0 0;">Page Data</div>
<div class="abs" style="left:254.3px;top:435px;width:37.0px;height:10.5px;border:0.8px solid #6a6a6a;border-radius:1.5px;background:linear-gradient(#fdfdfd,#e0e0e0)"></div>
<div class="t" style="left:266.80px;top:438.33px;font-size:6.20px;color:#222;transform:scaleX(0.870);transform-origin:0 0;-webkit-text-stroke:0.1px #222;">Load</div>
<div class="abs" style="left:292.4px;top:435px;width:37.3px;height:10.5px;border:0.8px solid #6a6a6a;border-radius:1.5px;background:linear-gradient(#fdfdfd,#e0e0e0)"></div>
<div class="t" style="left:305.05px;top:438.33px;font-size:6.20px;color:#222;transform:scaleX(0.849);transform-origin:0 0;-webkit-text-stroke:0.1px #222;">Save</div>
<div class="abs" style="left:752.0px;top:425.5px;width:19.5px;height:19.5px;border-radius:50%;border:0.8px solid #9a9a9a;background:radial-gradient(circle at 35% 30%,#ffffff,#e8e8e8 50%,#c8c8c8)"></div>
<svg class="abs" style="left:758.0px;top:431px" width="8" height="8"><path d="M0.3 3.8L7 0.3L7 7.3Z" fill="#3a3a3a"/></svg>
<div class="t" style="left:752.85px;top:446.59px;font-size:4.60px;color:#9a9a9a;">Previous</div>
<div class="abs" style="left:775.2px;top:425.5px;width:19.5px;height:19.5px;border-radius:50%;border:0.8px solid #9a9a9a;background:radial-gradient(circle at 35% 30%,#ffffff,#e8e8e8 50%,#c8c8c8)"></div>
<svg class="abs" style="left:782.0px;top:431px" width="8" height="8"><path d="M7.3 3.8L0.6 0.3L0.6 7.3Z" fill="#3a3a3a"/></svg>
<div class="t" style="left:780.27px;top:446.59px;font-size:4.60px;color:#9a9a9a;">Next</div>
<svg class="abs" style="left:237.00px;top:457.30px" width="9.5" height="9" viewBox="0 0 9.5 9"><rect x="0.4" y="0.4" width="8.6" height="6.4" rx="1" fill="#b8b8b8"/><rect x="1.3" y="1.4" width="6.8" height="4.2" fill="#1e2638"/><path d="M1.3 3.2Q4.7 2.2 8.1 3.2V1.4H1.3Z" fill="#56607a"/><path d="M2.5 8.6Q4.7 6.5 7 8.6Z" fill="#e0e0e0"/></svg>
<div class="t" style="left:248.80px;top:458.64px;font-size:6.30px;color:#e6e6e6;transform:scaleX(0.942);transform-origin:0 0;-webkit-text-stroke:0.12px #e6e6e6;">Display Profiling Workflow</div>
<svg class="abs" style="left:0;top:0" width="0" height="0"><defs>
<linearGradient id="gm1" x1="0.1" y1="0.1" x2="1" y2="0.85"><stop offset="0" stop-color="#20c040"/><stop offset="0.4" stop-color="#40c070"/><stop offset="0.65" stop-color="#d0b040"/><stop offset="1" stop-color="#f01050"/></linearGradient>
<radialGradient id="gm2" cx="0.1" cy="0.85" r="0.6"><stop offset="0" stop-color="#20c0c0"/><stop offset="1" stop-color="#20c0a0" stop-opacity="0"/></radialGradient>
<linearGradient id="chk" x1="0" y1="0" x2="0" y2="1"><stop offset="0" stop-color="#409040"/><stop offset="1" stop-color="#1c5a1c"/></linearGradient>
<linearGradient id="chk2" x1="0" y1="0" x2="0" y2="1"><stop offset="0" stop-color="#70e070"/><stop offset="1" stop-color="#10a010"/></linearGradient>
<linearGradient id="scr" x1="0" y1="0" x2="0" y2="1"><stop offset="0" stop-color="#6a6e76"/><stop offset="0.55" stop-color="#1e2024"/><stop offset="0.8" stop-color="#2a2c30"/><stop offset="1" stop-color="#3a3c40"/></linearGradient>
<radialGradient id="gG" cx="0.15" cy="0.05" r="0.75"><stop offset="0" stop-color="#10c030"/><stop offset="0.55" stop-color="#20c060" stop-opacity="0.9"/><stop offset="1" stop-color="#20c060" stop-opacity="0"/></radialGradient>
<radialGradient id="gR" cx="1" cy="0.62" r="0.6"><stop offset="0" stop-color="#f00030"/><stop offset="0.5" stop-color="#e04060" stop-opacity="0.8"/><stop offset="1" stop-color="#e0a040" stop-opacity="0"/></radialGradient>
<radialGradient id="gB" cx="0.25" cy="1" r="0.55"><stop offset="0" stop-color="#4010e0"/><stop offset="0.5" stop-color="#a020c0" stop-opacity="0.7"/><stop offset="1" stop-color="#a020c0" stop-opacity="0"/></radialGradient>
<radialGradient id="gY" cx="0.7" cy="0.45" r="0.4"><stop offset="0" stop-color="#e0d060" stop-opacity="0.7"/><stop offset="1" stop-color="#e0d060" stop-opacity="0"/></radialGradient>
<linearGradient id="scr2" x1="0" y1="0" x2="0" y2="1"><stop offset="0" stop-color="#7a7e84"/><stop offset="0.5" stop-color="#3a3c40"/><stop offset="1" stop-color="#55575a"/></linearGradient>
</defs></svg>
<svg class="abs" style="left:250.50px;top:480.00px" width="32" height="26" viewBox="0 0 32 26"><rect x="1" y="1" width="26.6" height="18.5" fill="#4a4a4a" stroke="#858585" stroke-width="1.3"/><rect x="2.2" y="2.2" width="24.2" height="16" fill="url(#scr)"/><path d="M12 19.5L16.5 19.5L16.5 22L12 22Z" fill="#6a6a6a"/><ellipse cx="14" cy="23.3" rx="7.5" ry="1.9" fill="#7a7a7a"/><circle cx="13.2" cy="19" r="2.6" fill="#c8c8c8"/><path d="M13.2 16.4A2.6 2.6 0 0 0 13.2 21.6Z" fill="#6a6a6a"/><path d="M16.5 19H21M18.5 16.8L20 18M18.5 21.2L20 20" stroke="#bbb" stroke-width="0.7"/><path d="M25.5 17L31 21.5L27 21.8Z" fill="#9a9a9a"/></svg>
<svg class="abs" style="left:274.40px;top:502.80px" width="12.2" height="12.2" viewBox="0 0 12.2 12.2"><circle cx="6.1" cy="6.1" r="5.5" fill="url(#chk)" stroke="#6a806a" stroke-width="1"/><path d="M3.294 6.1L5.246 8.296L9.028 3.66" fill="none" stroke="#d8e0d8" stroke-width="1.6"/></svg>
<svg class="abs" style="left:289.00px;top:489.80px" width="5.5" height="7" viewBox="0 0 5.5 7"><path d="M0.3 0.3L5.2 3.5L0.3 6.7Z" fill="#f4f4f4"/></svg>
<div class="t" style="left:243.25px;top:521.13px;font-size:6.20px;color:#6e6e6e;transform:scaleX(0.961);transform-origin:0 0;-webkit-text-stroke:0.12px #6e6e6e;">Display Settings</div>
<svg class="abs" style="left:303.00px;top:475.00px" width="30" height="34" viewBox="0 0 30 34"><path d="M6.5 1.8C12 3 20 12 27.5 19L19.3 22.3L5.5 17C4.5 10 5 4 6.5 1.8Z" fill="#f0f0f0"/><path d="M6.5 1.8C12 3 20 12 27.5 19L19.3 22.3L5.5 17C4.5 10 5 4 6.5 1.8Z" fill="url(#gY)"/><path d="M6.5 1.8C12 3 20 12 27.5 19L19.3 22.3L5.5 17C4.5 10 5 4 6.5 1.8Z" fill="url(#gG)"/><path d="M6.5 1.8C12 3 20 12 27.5 19L19.3 22.3L5.5 17C4.5 10 5 4 6.5 1.8Z" fill="url(#gR)"/><path d="M6.5 1.8C12 3 20 12 27.5 19L19.3 22.3L5.5 17C4.5 10 5 4 6.5 1.8Z" fill="url(#gm2)"/><g transform="translate(10.2,24.5)"><circle r="6.4" fill="#a4a4a4"/><g fill="#a4a4a4"><rect x="-1.7" y="-8.3" width="3.4" height="3.2" transform="rotate(0)"/><rect x="-1.7" y="-8.3" width="3.4" height="3.2" transform="rotate(45)"/><rect x="-1.7" y="-8.3" width="3.4" height="3.2" transform="rotate(90)"/><rect x="-1.7" y="-8.3" width="3.4" height="3.2" transform="rotate(135)"/><rect x="-1.7" y="-8.3" width="3.4" height="3.2" transform="rotate(180)"/><rect x="-1.7" y="-8.3" width="3.4" height="3.2" transform="rotate(225)"/><rect x="-1.7" y="-8.3" width="3.4" height="3.2" transform="rotate(270)"/><rect x="-1.7" y="-8.3" width="3.4" height="3.2" transform="rotate(315)"/></g><circle r="3.2" fill="#8a8a8a"/><ellipse rx="1.6" ry="2.6" fill="#3020b0" transform="rotate(-20)"/></g></svg>
<svg class="abs" style="left:327.50px;top:502.30px" width="12.2" height="12.2" viewBox="0 0 12.2 12.2"><circle cx="6.1" cy="6.1" r="5.5" fill="url(#chk)" stroke="#6a806a" stroke-width="1"/><path d="M3.294 6.1L5.246 8.296L9.028 3.66" fill="none" stroke="#d8e0d8" stroke-width="1.6"/></svg>
<svg class="abs" style="left:342.00px;top:489.60px" width="5.5" height="7" viewBox="0 0 5.5 7"><path d="M0.3 0.3L5.2 3.5L0.3 6.7Z" fill="#f4f4f4"/></svg>
<div class="t" style="left:297.70px;top:521.13px;font-size:6.20px;color:#6e6e6e;transform:scaleX(0.983);transform-origin:0 0;-webkit-text-stroke:0.12px #6e6e6e;">Profile Settings</div>
<svg class="abs" style="left:355.40px;top:477.10px" width="15.4" height="31" viewBox="0 0 15.4 31"><rect x="0" y="0" width="15.4" height="31" fill="#d8c020"/><rect x="0.80" y="0.60" width="2.1" height="2.1" fill="#f3eebd"/><rect x="2.88" y="0.60" width="2.1" height="2.1" fill="#efe58f"/><rect x="4.96" y="0.60" width="2.1" height="2.1" fill="#edde5e"/><rect x="7.04" y="0.60" width="2.1" height="2.1" fill="#edda2a"/><rect x="9.12" y="0.60" width="2.1" height="2.1" fill="#dac50b"/><rect x="11.20" y="0.60" width="2.1" height="2.1" fill="#ae9d04"/><rect x="13.28" y="0.60" width="2.1" height="2.1" fill="#7f7200"/><rect x="0.80" y="2.72" width="2.1" height="2.1" fill="#f3e1bd"/><rect x="2.88" y="2.72" width="2.1" height="2.1" fill="#efce8f"/><rect x="4.96" y="2.72" width="2.1" height="2.1" fill="#edbc5e"/><rect x="7.04" y="2.72" width="2.1" height="2.1" fill="#edab2a"/><rect x="9.12" y="2.72" width="2.1" height="2.1" fill="#da930b"/><rect x="11.20" y="2.72" width="2.1" height="2.1" fill="#ae7404"/><rect x="13.28" y="2.72" width="2.1" height="2.1" fill="#7f5400"/><rect x="0.80" y="4.84" width="2.1" height="2.1" fill="#f3d1bd"/><rect x="2.88" y="4.84" width="2.1" height="2.1" fill="#efb18f"/><rect x="4.96" y="4.84" width="2.1" height="2.1" fill="#ed915e"/><rect x="7.04" y="4.84" width="2.1" height="2.1" fill="#ed702a"/><rect x="9.12" y="4.84" width="2.1" height="2.1" fill="#da550b"/><rect x="11.20" y="4.84" width="2.1" height="2.1" fill="#ae4104"/><rect x="13.28" y="4.84" width="2.1" height="2.1" fill="#7f2d00"/><rect x="0.80" y="6.96" width="2.1" height="2.1" fill="#f3bdbd"/><rect x="2.88" y="6.96" width="2.1" height="2.1" fill="#ef8f8f"/><rect x="4.96" y="6.96" width="2.1" height="2.1" fill="#ed5e5e"/><rect x="7.04" y="6.96" width="2.1" height="2.1" fill="#ed2a2a"/><rect x="9.12" y="6.96" width="2.1" height="2.1" fill="#da0b0b"/><rect x="11.20" y="6.96" width="2.1" height="2.1" fill="#ae0404"/><rect x="13.28" y="6.96" width="2.1" height="2.1" fill="#7f0000"/><rect x="0.80" y="9.08" width="2.1" height="2.1" fill="#f3bdd1"/><rect x="2.88" y="9.08" width="2.1" height="2.1" fill="#ef8fb1"/><rect x="4.96" y="9.08" width="2.1" height="2.1" fill="#ed5e91"/><rect x="7.04" y="9.08" width="2.1" height="2.1" fill="#ed2a70"/><rect x="9.12" y="9.08" width="2.1" height="2.1" fill="#da0b55"/><rect x="11.20" y="9.08" width="2.1" height="2.1" fill="#ae0441"/><rect x="13.28" y="9.08" width="2.1" height="2.1" fill="#7f002d"/><rect x="0.80" y="11.20" width="2.1" height="2.1" fill="#f3bdea"/><rect x="2.88" y="11.20" width="2.1" height="2.1" fill="#ef8fdf"/><rect x="4.96" y="11.20" width="2.1" height="2.1" fill="#ed5ed6"/><rect x="7.04" y="11.20" width="2.1" height="2.1" fill="#ed2ace"/><rect x="9.12" y="11.20" width="2.1" height="2.1" fill="#da0bb8"/><rect x="11.20" y="11.20" width="2.1" height="2.1" fill="#ae0492"/><rect x="13.28" y="11.20" width="2.1" height="2.1" fill="#7f006b"/><rect x="0.80" y="13.32" width="2.1" height="2.1" fill="#e2bdf3"/><rect x="2.88" y="13.32" width="2.1" height="2.1" fill="#d08fef"/><rect x="4.96" y="13.32" width="2.1" height="2.1" fill="#bf5eed"/><rect x="7.04" y="13.32" width="2.1" height="2.1" fill="#af2aed"/><rect x="9.12" y="13.32" width="2.1" height="2.1" fill="#970bda"/><rect x="11.20" y="13.32" width="2.1" height="2.1" fill="#7704ae"/><rect x="13.28" y="13.32" width="2.1" height="2.1" fill="#56007f"/><rect x="0.80" y="15.44" width="2.1" height="2.1" fill="#c2bdf3"/><rect x="2.88" y="15.44" width="2.1" height="2.1" fill="#978fef"/><rect x="4.96" y="15.44" width="2.1" height="2.1" fill="#695eed"/><rect x="7.04" y="15.44" width="2.1" height="2.1" fill="#3a2aed"/><rect x="9.12" y="15.44" width="2.1" height="2.1" fill="#1b0bda"/><rect x="11.20" y="15.44" width="2.1" height="2.1" fill="#1204ae"/><rect x="13.28" y="15.44" width="2.1" height="2.1" fill="#0a007f"/><rect x="0.80" y="17.56" width="2.1" height="2.1" fill="#bdd3f3"/><rect x="2.88" y="17.56" width="2.1" height="2.1" fill="#8fb5ef"/><rect x="4.96" y="17.56" width="2.1" height="2.1" fill="#5e97ed"/><rect x="7.04" y="17.56" width="2.1" height="2.1" fill="#2a78ed"/><rect x="9.12" y="17.56" width="2.1" height="2.1" fill="#0b5eda"/><rect x="11.20" y="17.56" width="2.1" height="2.1" fill="#0448ae"/><rect x="13.28" y="17.56" width="2.1" height="2.1" fill="#00327f"/><rect x="0.80" y="19.68" width="2.1" height="2.1" fill="#bdedf3"/><rect x="2.88" y="19.68" width="2.1" height="2.1" fill="#8fe3ef"/><rect x="4.96" y="19.68" width="2.1" height="2.1" fill="#5edced"/><rect x="7.04" y="19.68" width="2.1" height="2.1" fill="#2ad6ed"/><rect x="9.12" y="19.68" width="2.1" height="2.1" fill="#0bc1da"/><rect x="11.20" y="19.68" width="2.1" height="2.1" fill="#0499ae"/><rect x="13.28" y="19.68" width="2.1" height="2.1" fill="#00707f"/><rect x="0.80" y="21.80" width="2.1" height="2.1" fill="#bdf3e3"/><rect x="2.88" y="21.80" width="2.1" height="2.1" fill="#8fefd2"/><rect x="4.96" y="21.80" width="2.1" height="2.1" fill="#5eedc2"/><rect x="7.04" y="21.80" width="2.1" height="2.1" fill="#2aedb3"/><rect x="9.12" y="21.80" width="2.1" height="2.1" fill="#0bda9c"/><rect x="11.20" y="21.80" width="2.1" height="2.1" fill="#04ae7b"/><rect x="13.28" y="21.80" width="2.1" height="2.1" fill="#007f59"/><rect x="0.80" y="23.92" width="2.1" height="2.1" fill="#bdf3c6"/><rect x="2.88" y="23.92" width="2.1" height="2.1" fill="#8fef9e"/><rect x="4.96" y="23.92" width="2.1" height="2.1" fill="#5eed75"/><rect x="7.04" y="23.92" width="2.1" height="2.1" fill="#2aed49"/><rect x="9.12" y="23.92" width="2.1" height="2.1" fill="#0bda2c"/><rect x="11.20" y="23.92" width="2.1" height="2.1" fill="#04ae1f"/><rect x="13.28" y="23.92" width="2.1" height="2.1" fill="#007f14"/><rect x="0.80" y="26.04" width="2.1" height="2.1" fill="#d8f3bd"/><rect x="2.88" y="26.04" width="2.1" height="2.1" fill="#bfef8f"/><rect x="4.96" y="26.04" width="2.1" height="2.1" fill="#a5ed5e"/><rect x="7.04" y="26.04" width="2.1" height="2.1" fill="#8ced2a"/><rect x="9.12" y="26.04" width="2.1" height="2.1" fill="#72da0b"/><rect x="11.20" y="26.04" width="2.1" height="2.1" fill="#59ae04"/><rect x="13.28" y="26.04" width="2.1" height="2.1" fill="#3f7f00"/><rect x="0.80" y="28.16" width="2.1" height="2.1" fill="#f3f1bd"/><rect x="2.88" y="28.16" width="2.1" height="2.1" fill="#efeb8f"/><rect x="4.96" y="28.16" width="2.1" height="2.1" fill="#ede75e"/><rect x="7.04" y="28.16" width="2.1" height="2.1" fill="#ede52a"/><rect x="9.12" y="28.16" width="2.1" height="2.1" fill="#dad10b"/><rect x="11.20" y="28.16" width="2.1" height="2.1" fill="#aea704"/><rect x="13.28" y="28.16" width="2.1" height="2.1" fill="#7f7a00"/></svg>
<svg class="abs" style="left:370.60px;top:477.10px" width="15.4" height="31" viewBox="0 0 15.4 31"><rect x="0" y="0" width="15.4" height="31" fill="#d8c020"/><rect x="0.80" y="0.60" width="2.1" height="2.1" fill="#f3eebd"/><rect x="2.88" y="0.60" width="2.1" height="2.1" fill="#efe58f"/><rect x="4.96" y="0.60" width="2.1" height="2.1" fill="#edde5e"/><rect x="7.04" y="0.60" width="2.1" height="2.1" fill="#edda2a"/><rect x="9.12" y="0.60" width="2.1" height="2.1" fill="#dac50b"/><rect x="11.20" y="0.60" width="2.1" height="2.1" fill="#ae9d04"/><rect x="13.28" y="0.60" width="2.1" height="2.1" fill="#7f7200"/><rect x="0.80" y="2.72" width="2.1" height="2.1" fill="#f3e1bd"/><rect x="2.88" y="2.72" width="2.1" height="2.1" fill="#efce8f"/><rect x="4.96" y="2.72" width="2.1" height="2.1" fill="#edbc5e"/><rect x="7.04" y="2.72" width="2.1" height="2.1" fill="#edab2a"/><rect x="9.12" y="2.72" width="2.1" height="2.1" fill="#da930b"/><rect x="11.20" y="2.72" width="2.1" height="2.1" fill="#ae7404"/><rect x="13.28" y="2.72" width="2.1" height="2.1" fill="#7f5400"/><rect x="0.80" y="4.84" width="2.1" height="2.1" fill="#f3d1bd"/><rect x="2.88" y="4.84" width="2.1" height="2.1" fill="#efb18f"/><rect x="4.96" y="4.84" width="2.1" height="2.1" fill="#ed915e"/><rect x="7.04" y="4.84" width="2.1" height="2.1" fill="#ed702a"/><rect x="9.12" y="4.84" width="2.1" height="2.1" fill="#da550b"/><rect x="11.20" y="4.84" width="2.1" height="2.1" fill="#ae4104"/><rect x="13.28" y="4.84" width="2.1" height="2.1" fill="#7f2d00"/><rect x="0.80" y="6.96" width="2.1" height="2.1" fill="#f3bdbd"/><rect x="2.88" y="6.96" width="2.1" height="2.1" fill="#ef8f8f"/><rect x="4.96" y="6.96" width="2.1" height="2.1" fill="#ed5e5e"/><rect x="7.04" y="6.96" width="2.1" height="2.1" fill="#ed2a2a"/><rect x="9.12" y="6.96" width="2.1" height="2.1" fill="#da0b0b"/><rect x="11.20" y="6.96" width="2.1" height="2.1" fill="#ae0404"/><rect x="13.28" y="6.96" width="2.1" height="2.1" fill="#7f0000"/><rect x="0.80" y="9.08" width="2.1" height="2.1" fill="#f3bdd1"/><rect x="2.88" y="9.08" width="2.1" height="2.1" fill="#ef8fb1"/><rect x="4.96" y="9.08" width="2.1" height="2.1" fill="#ed5e91"/><rect x="7.04" y="9.08" width="2.1" height="2.1" fill="#ed2a70"/><rect x="9.12" y="9.08" width="2.1" height="2.1" fill="#da0b55"/><rect x="11.20" y="9.08" width="2.1" height="2.1" fill="#ae0441"/><rect x="13.28" y="9.08" width="2.1" height="2.1" fill="#7f002d"/><rect x="0.80" y="11.20" width="2.1" height="2.1" fill="#f3bdea"/><rect x="2.88" y="11.20" width="2.1" height="2.1" fill="#ef8fdf"/><rect x="4.96" y="11.20" width="2.1" height="2.1" fill="#ed5ed6"/><rect x="7.04" y="11.20" width="2.1" height="2.1" fill="#ed2ace"/><rect x="9.12" y="11.20" width="2.1" height="2.1" fill="#da0bb8"/><rect x="11.20" y="11.20" width="2.1" height="2.1" fill="#ae0492"/><rect x="13.28" y="11.20" width="2.1" height="2.1" fill="#7f006b"/><rect x="0.80" y="13.32" width="2.1" height="2.1" fill="#e2bdf3"/><rect x="2.88" y="13.32" width="2.1" height="2.1" fill="#d08fef"/><rect x="4.96" y="13.32" width="2.1" height="2.1" fill="#bf5eed"/><rect x="7.04" y="13.32" width="2.1" height="2.1" fill="#af2aed"/><rect x="9.12" y="13.32" width="2.1" height="2.1" fill="#970bda"/><rect x="11.20" y="13.32" width="2.1" height="2.1" fill="#7704ae"/><rect x="13.28" y="13.32" width="2.1" height="2.1" fill="#56007f"/><rect x="0.80" y="15.44" width="2.1" height="2.1" fill="#c2bdf3"/><rect x="2.88" y="15.44" width="2.1" height="2.1" fill="#978fef"/><rect x="4.96" y="15.44" width="2.1" height="2.1" fill="#695eed"/><rect x="7.04" y="15.44" width="2.1" height="2.1" fill="#3a2aed"/><rect x="9.12" y="15.44" width="2.1" height="2.1" fill="#1b0bda"/><rect x="11.20" y="15.44" width="2.1" height="2.1" fill="#1204ae"/><rect x="13.28" y="15.44" width="2.1" height="2.1" fill="#0a007f"/><rect x="0.80" y="17.56" width="2.1" height="2.1" fill="#bdd3f3"/><rect x="2.88" y="17.56" width="2.1" height="2.1" fill="#8fb5ef"/><rect x="4.96" y="17.56" width="2.1" height="2.1" fill="#5e97ed"/><rect x="7.04" y="17.56" width="2.1" height="2.1" fill="#2a78ed"/><rect x="9.12" y="17.56" width="2.1" height="2.1" fill="#0b5eda"/><rect x="11.20" y="17.56" width="2.1" height="2.1" fill="#0448ae"/><rect x="13.28" y="17.56" width="2.1" height="2.1" fill="#00327f"/><rect x="0.80" y="19.68" width="2.1" height="2.1" fill="#bdedf3"/><rect x="2.88" y="19.68" width="2.1" height="2.1" fill="#8fe3ef"/><rect x="4.96" y="19.68" width="2.1" height="2.1" fill="#5edced"/><rect x="7.04" y="19.68" width="2.1" height="2.1" fill="#2ad6ed"/><rect x="9.12" y="19.68" width="2.1" height="2.1" fill="#0bc1da"/><rect x="11.20" y="19.68" width="2.1" height="2.1" fill="#0499ae"/><rect x="13.28" y="19.68" width="2.1" height="2.1" fill="#00707f"/><rect x="0.80" y="21.80" width="2.1" height="2.1" fill="#bdf3e3"/><rect x="2.88" y="21.80" width="2.1" height="2.1" fill="#8fefd2"/><rect x="4.96" y="21.80" width="2.1" height="2.1" fill="#5eedc2"/><rect x="7.04" y="21.80" width="2.1" height="2.1" fill="#2aedb3"/><rect x="9.12" y="21.80" width="2.1" height="2.1" fill="#0bda9c"/><rect x="11.20" y="21.80" width="2.1" height="2.1" fill="#04ae7b"/><rect x="13.28" y="21.80" width="2.1" height="2.1" fill="#007f59"/><rect x="0.80" y="23.92" width="2.1" height="2.1" fill="#bdf3c6"/><rect x="2.88" y="23.92" width="2.1" height="2.1" fill="#8fef9e"/><rect x="4.96" y="23.92" width="2.1" height="2.1" fill="#5eed75"/><rect x="7.04" y="23.92" width="2.1" height="2.1" fill="#2aed49"/><rect x="9.12" y="23.92" width="2.1" height="2.1" fill="#0bda2c"/><rect x="11.20" y="23.92" width="2.1" height="2.1" fill="#04ae1f"/><rect x="13.28" y="23.92" width="2.1" height="2.1" fill="#007f14"/><rect x="0.80" y="26.04" width="2.1" height="2.1" fill="#d8f3bd"/><rect x="2.88" y="26.04" width="2.1" height="2.1" fill="#bfef8f"/><rect x="4.96" y="26.04" width="2.1" height="2.1" fill="#a5ed5e"/><rect x="7.04" y="26.04" width="2.1" height="2.1" fill="#8ced2a"/><rect x="9.12" y="26.04" width="2.1" height="2.1" fill="#72da0b"/><rect x="11.20" y="26.04" width="2.1" height="2.1" fill="#59ae04"/><rect x="13.28" y="26.04" width="2.1" height="2.1" fill="#3f7f00"/><rect x="0.80" y="28.16" width="2.1" height="2.1" fill="#f3f1bd"/><rect x="2.88" y="28.16" width="2.1" height="2.1" fill="#efeb8f"/><rect x="4.96" y="28.16" width="2.1" height="2.1" fill="#ede75e"/><rect x="7.04" y="28.16" width="2.1" height="2.1" fill="#ede52a"/><rect x="9.12" y="28.16" width="2.1" height="2.1" fill="#dad10b"/><rect x="11.20" y="28.16" width="2.1" height="2.1" fill="#aea704"/><rect x="13.28" y="28.16" width="2.1" height="2.1" fill="#7f7a00"/></svg>
<div class="abs" style="left:370px;top:470.8px;width:21.5px;height:7px;border-radius:3.5px;background:linear-gradient(#707070,#303030);border:1px solid #d8d8d8"></div>
<div class="t" style="left:376.63px;top:472.35px;font-size:5.00px;color:#f0f0f0;">461</div>
<svg class="abs" style="left:380.60px;top:501.80px" width="13" height="13" viewBox="0 0 13 13"><circle cx="6.5" cy="6.5" r="5.9" fill="url(#chk2)" stroke="#f0f0f0" stroke-width="1"/><path d="M3.51 6.5L5.59 8.84L9.62 3.9" fill="none" stroke="#fff" stroke-width="1.6"/></svg>
<svg class="abs" style="left:395.20px;top:489.60px" width="5.5" height="7" viewBox="0 0 5.5 7"><path d="M0.3 0.3L5.2 3.5L0.3 6.7Z" fill="#f4f4f4"/></svg>
<div class="t" style="left:356.70px;top:520.79px;font-size:6.60px;color:#f4f4f4;font-weight:bold;transform:scaleX(0.975);transform-origin:0 0;">Patch set</div>
<svg class="abs" style="left:410.00px;top:480.00px" width="27.5" height="26" viewBox="0 0 27.5 26"><rect x="0.9" y="0.9" width="25.3" height="18.6" fill="#3a3a3a" stroke="#9a9a9a" stroke-width="1.1"/><rect x="2" y="2" width="23.1" height="16.4" fill="url(#scr2)"/><path d="M12.3 1.5H14.9L15.3 8L14.5 16L12.7 16L11.9 8Z" fill="#8a8a8a"/><rect x="12.6" y="9" width="2" height="5" fill="#b0b0b0"/><path d="M11.5 19.5L15.5 19.5L15.5 21.5L11.5 21.5Z" fill="#6a6a6a"/><ellipse cx="13.5" cy="23.3" rx="7.8" ry="2.1" fill="#858585"/></svg>
<svg class="abs" style="left:447.80px;top:489.60px" width="5.5" height="7" viewBox="0 0 5.5 7"><path d="M0.3 0.3L5.2 3.5L0.3 6.7Z" fill="#f4f4f4"/></svg>
<div class="t" style="left:405.25px;top:521.13px;font-size:6.20px;color:#6e6e6e;transform:scaleX(0.968);transform-origin:0 0;-webkit-text-stroke:0.12px #6e6e6e;">Measurement</div>
<svg class="abs" style="left:464.80px;top:475.90px" width="25" height="33" viewBox="0 0 25 33"><path d="M0.3 0.3L17.5 0.3L24.4 7.2L24.4 32.3L0.3 32.3Z" fill="#acacac"/><path d="M17.5 0.3L17.5 7.2L24.4 7.2Z" fill="#dcdcdc"/><path d="M4.2 8C6 5.5 9 8 14 13L21.5 21.7L6.5 29.6C4 22 2.8 13 4.2 8Z" fill="#f0f0f0"/><path d="M4.2 8C6 5.5 9 8 14 13L21.5 21.7L6.5 29.6C4 22 2.8 13 4.2 8Z" fill="url(#gY)"/><path d="M4.2 8C6 5.5 9 8 14 13L21.5 21.7L6.5 29.6C4 22 2.8 13 4.2 8Z" fill="url(#gG)"/><path d="M4.2 8C6 5.5 9 8 14 13L21.5 21.7L6.5 29.6C4 22 2.8 13 4.2 8Z" fill="url(#gR)"/><path d="M4.2 8C6 5.5 9 8 14 13L21.5 21.7L6.5 29.6C4 22 2.8 13 4.2 8Z" fill="url(#gB)"/></svg>
<div class="t" style="left:463.40px;top:521.13px;font-size:6.20px;color:#6e6e6e;transform:scaleX(0.901);transform-origin:0 0;-webkit-text-stroke:0.12px #6e6e6e;">ICC Profile</div>
<div class="t" style="left:520.20px;top:491.70px;font-size:6.00px;color:#d0d0d0;transform:scaleX(0.886);transform-origin:0 0;">Display QA</div>
<svg class="abs" style="left:549.80px;top:491.80px" width="7" height="7" viewBox="0 0 7 7"><circle cx="3.5" cy="3.5" r="3.3" fill="#f0f0f0"/><path d="M2 3.5L5 3.5M3.8 2.2L5.1 3.5L3.8 4.8" stroke="#444" stroke-width="0.9" fill="none"/></svg>
<div class="abs" style="left:0;top:528px;width:800px;height:1px;background:#8c8c8c"></div>
<svg class="abs" style="left:24.00px;top:533.80px" width="9.5" height="9" viewBox="0 0 9.5 9"><path d="M0.2 0.2H3.4L0.2 3.4Z" fill="#262626"/><path d="M1.2 1.2L3.6 3.6" stroke="#262626" stroke-width="1.3"/><path d="M9 8.6H5.8L9 5.4Z" fill="#262626"/><path d="M8 7.6L5.6 5.2" stroke="#262626" stroke-width="1.3"/></svg>
<div class="t" style="left:15.95px;top:543.61px;font-size:5.40px;color:#333;transform:scaleX(0.904);transform-origin:0 0;-webkit-text-stroke:0.1px #333;">Full Screen</div>
<svg class="abs" style="left:52.50px;top:535.00px" width="9" height="6.5" viewBox="0 0 9 6.5"><rect x="0" y="0" width="1.3" height="1.2" fill="#262626"/><rect x="2.6" y="0.2" width="5.6" height="0.7" fill="#262626"/><rect x="0" y="2.5" width="1.3" height="1.2" fill="#262626"/><rect x="2.6" y="2.7" width="5.6" height="0.7" fill="#262626"/><rect x="0" y="5" width="1.3" height="1.2" fill="#262626"/><rect x="2.6" y="5.2" width="5.6" height="0.7" fill="#262626"/></svg>
<div class="t" style="left:49.95px;top:543.61px;font-size:5.40px;color:#333;transform:scaleX(0.808);transform-origin:0 0;-webkit-text-stroke:0.1px #333;">Assets</div>
<div class="t" style="left:80.30px;top:533.05px;font-size:11.00px;color:#262626;font-weight:bold;transform:scaleX(0.893);transform-origin:0 0;">?</div>
<div class="t" style="left:78.00px;top:543.61px;font-size:5.40px;color:#333;transform:scaleX(0.882);transform-origin:0 0;-webkit-text-stroke:0.1px #333;">Help</div>
<svg class="abs" style="left:105.50px;top:534.00px" width="9" height="8.5" viewBox="0 0 9 8.5"><path d="M0.6 4.2L4.5 0.7L8.4 4.2" fill="none" stroke="#262626" stroke-width="1.2"/><path d="M1.8 3.8L1.8 8L7.2 8L7.2 3.8" fill="none" stroke="#262626" stroke-width="1.2"/><rect x="3.6" y="5" width="1.8" height="3" fill="#262626"/></svg>
<div class="t" style="left:103.95px;top:543.61px;font-size:5.40px;color:#333;transform:scaleX(0.854);transform-origin:0 0;-webkit-text-stroke:0.1px #333;">Home</div>
<svg class="abs" style="left:716.50px;top:534.00px" width="17" height="7" viewBox="0 0 17 7"><path d="M1 2.1H12.5" stroke="#3a3a3a" stroke-width="1" stroke-dasharray="1.1 0.7"/><path d="M6 4.9H12.5" stroke="#333" stroke-width="1.7"/><path d="M12.3 3.2L15.5 4.9L12.3 6.6Z" fill="#333"/></svg>
<div class="t" style="left:707.60px;top:543.64px;font-size:5.60px;color:#333;transform:scaleX(0.958);transform-origin:0 0;-webkit-text-stroke:0.1px #333;">Load Workflow</div>
<svg class="abs" style="left:760.00px;top:534.00px" width="15" height="8" viewBox="0 0 15 8"><path d="M0.7 2.1H7.7" stroke="#3a3a3a" stroke-width="1" stroke-dasharray="1.1 0.7"/><path d="M8.2 0.9H10.2V3.4H8.2M11.2 0.9H13.2V6.6H8.2" fill="none" stroke="#333" stroke-width="1.1"/><path d="M4.5 5.3H11.5" stroke="#333" stroke-width="1.1"/></svg>
<div class="t" style="left:749.80px;top:543.64px;font-size:5.60px;color:#333;transform:scaleX(0.945);transform-origin:0 0;-webkit-text-stroke:0.1px #333;">Save Workflow</div>
<svg class="abs" style="left:793.00px;top:544.00px" width="7" height="7" viewBox="0 0 7 7"><path d="M6.5 1L1 6.5M6.5 3.5L3.5 6.5M6.5 6L6 6.5" stroke="#999" stroke-width="0.8"/></svg>
</body></html>
